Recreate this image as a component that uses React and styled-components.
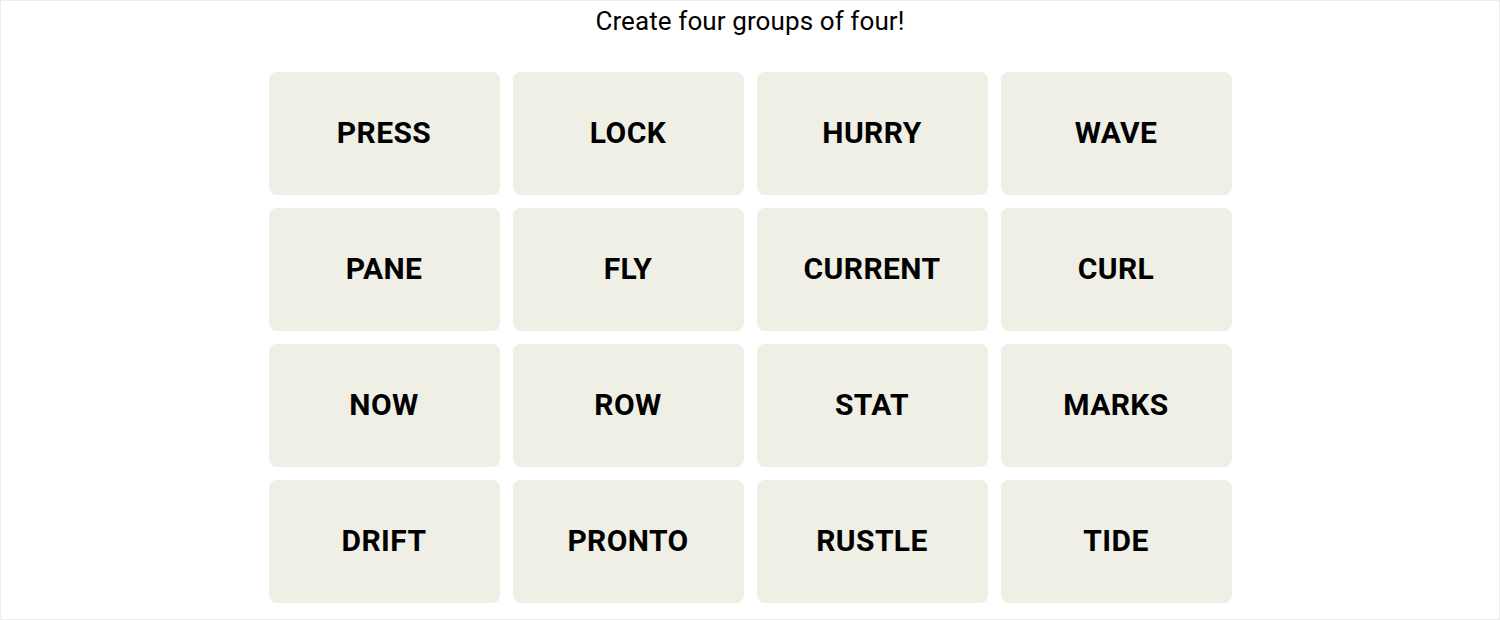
import React from 'react';
import styled, { createGlobalStyle } from 'styled-components';

const GlobalStyle = createGlobalStyle`
  html, body {
    margin: 0;
    padding: 0;
    background: #ffffff;
  }
  * {
    box-sizing: border-box;
  }
`;

const Frame = styled.div`
  width: 1500px;
  height: 620px;
  border: 1px solid #ededed;
  display: flex;
  flex-direction: column;
  align-items: center;
  font-family: Roboto, "Liberation Sans", sans-serif;
  color: #000;
`;

const Title = styled.h2`
  margin: 4px 0 0;
  font-size: 26px;
  line-height: 32px;
  font-weight: 400;
  letter-spacing: 0.1px;
`;

const Board = styled.div`
  margin-top: 35px;
  display: grid;
  grid-template-columns: repeat(4, 231px);
  grid-auto-rows: 123px;
  gap: 13px;
`;

const Tile = styled.button`
  border: none;
  border-radius: 8px;
  background: #efefe6;
  display: flex;
  align-items: center;
  justify-content: center;
  padding: 0 0 2px;
  font-family: inherit;
  font-size: 30px;
  font-weight: 700;
  letter-spacing: 0.4px;
  color: #000;
  text-transform: uppercase;
  cursor: pointer;
`;

const words = [
  'PRESS', 'LOCK', 'HURRY', 'WAVE',
  'PANE', 'FLY', 'CURRENT', 'CURL',
  'NOW', 'ROW', 'STAT', 'MARKS',
  'DRIFT', 'PRONTO', 'RUSTLE', 'TIDE',
];

const App = () => {
  return (
    <>
      <GlobalStyle />
      <Frame>
        <Title>Create four groups of four!</Title>
        <Board>
          {words.map(w => (
            <Tile key={w}>{w}</Tile>
          ))}
        </Board>
      </Frame>
    </>
  );
};

export default App;
